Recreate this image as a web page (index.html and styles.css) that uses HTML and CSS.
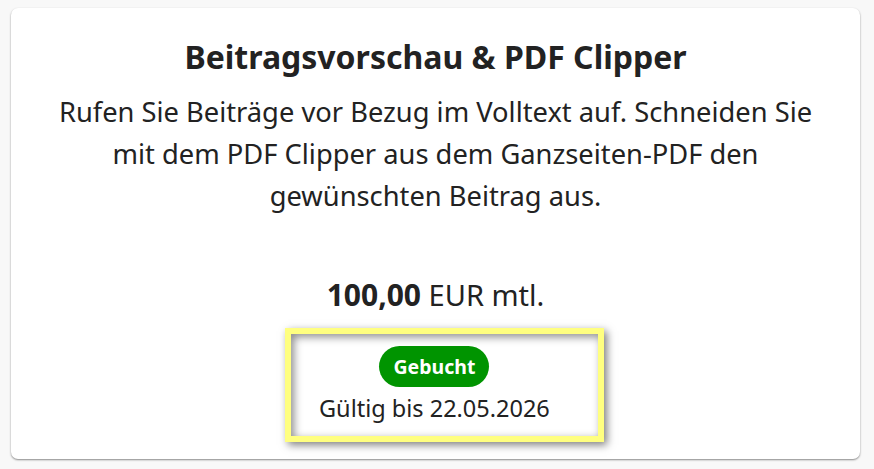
FILE: index.html
```html
<!DOCTYPE html>
<html>
    <head>
        <title>Beitragsvorschau</title>
        <link rel="stylesheet" href="styles.css">
    </head>
    <body>
        <div class="card">
            <h2 class="card-title">Beitragsvorschau &amp; PDF Clipper</h2>
            <p class="card-text">Rufen Sie Beiträge vor Bezug im Volltext auf. Schneiden Sie<br>mit dem PDF Clipper aus dem Ganzseiten-PDF den<br>gewünschten Beitrag aus.</p>
            <div class="price"><b>100,00</b> EUR mtl.</div>
            <div class="booked">
                <span class="badge">Gebucht</span>
                <div class="valid">Gültig bis 22.05.2026</div>
            </div>
        </div>
    </body>
</html>
```

FILE: styles.css
```css
body{
    margin:0;
    padding:8px 14px 10px 11px;
    background-color:#f8f8f8;
    font-family:"Noto Sans", sans-serif;
    color:#222;
}
.card{
    background-color:#fff;
    border-radius:7px;
    box-shadow:0 1px 2px rgba(0,0,0,0.45);
    height:451px;
    box-sizing:border-box;
    padding:29px 20px 0 20px;
    text-align:center;
}
.card-title{
    font-size:32px;
    font-weight:bold;
    margin:0;
    line-height:40px;
}
.card-text{
    font-size:27.3px;
    line-height:42px;
    margin:14px 0 0 0;
}
.price{
    font-size:29px;
    margin-top:63px;
    line-height:30px;
}
.price b{
    font-size:30px;
}
.booked{
    display:flex;
    flex-direction:column;
    align-items:center;
    width:fit-content;
    margin:18px 0 0 254px;
    border:6px solid #ffff80;
    box-shadow:3px 3px 8px rgba(0,0,0,0.5), inset 3px 3px 8px rgba(0,0,0,0.45);
    padding:12px 48px 13px 28px;
}
.badge{
    display:block;
    background-color:#009400;
    color:#fff;
    font-weight:bold;
    font-size:19.5px;
    padding:0 14px;
    line-height:41px;
    border-radius:21px;
}
.valid{
    font-size:23.5px;
    line-height:30px;
    margin-top:6px;
}
```
